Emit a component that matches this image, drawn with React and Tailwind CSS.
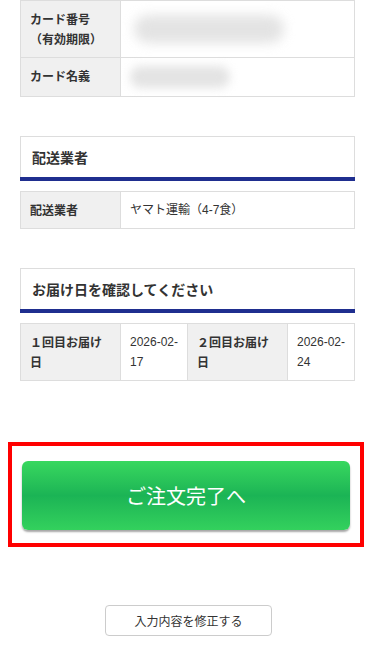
const font = { fontFamily: '"Liberation Sans", "Noto Sans CJK JP", "Noto Sans", sans-serif' };
const jp = { fontFamily: '"Noto Sans CJK JP", "Noto Sans", sans-serif' };

const Label = ({ children, className = "" }) => (
  <div className={`bg-[#f0f0f0] px-[9px] py-[8px] font-bold text-[12px] leading-[20px] text-[#333] ${className}`} style={jp}>
    {children}
  </div>
);

const Value = ({ children, className = "" }) => (
  <div className={`bg-white px-[9px] py-[8px] text-[12px] leading-[20px] text-[#333] ${className}`}>
    {children}
  </div>
);

const SectionHead = ({ title }) => (
  <div className="border border-b-0 border-[#ddd] bg-white">
    <div className="px-[11px] py-[10px] text-[14px] font-bold leading-[20px] text-[#333]" style={jp}>{title}</div>
    <div className="h-[4px] -mx-px bg-[#1f2e8f]"></div>
  </div>
);

export default function App() {
  return (
    <div className="min-h-[667px] bg-white" style={font}>
      <div className="mx-[20px] w-[335px]">
        {/* card info (previous row cut off above) */}
        <div className="border-x border-b border-[#ddd]">
          <div className="grid grid-cols-[100px_1fr] h-[1px] border-b border-[#ddd]">
            <div className="bg-[#f0f0f0] border-r border-[#ddd]"></div>
            <div></div>
          </div>
          <div className="grid grid-cols-[100px_1fr] border-b border-[#ddd]">
            <Label className="border-r border-[#ddd]">
              カード番号
              <br />
              （有効期限）
            </Label>
            <Value className="flex items-center">
              <div className="h-[28px] w-[150px] rounded-full bg-[#d8d8d8] blur-[6px] opacity-70 ml-1"></div>
            </Value>
          </div>
          <div className="grid grid-cols-[100px_1fr]">
            <Label className="border-r border-[#ddd]">カード名義</Label>
            <Value className="flex items-center">
              <div className="h-[22px] w-[100px] rounded-full bg-[#d8d8d8] blur-[5px] opacity-70"></div>
            </Value>
          </div>
        </div>

        {/* delivery */}
        <div className="mt-[39px]">
          <SectionHead title="配送業者" />
        </div>
        <div className="mt-[10px] border border-[#ddd] grid grid-cols-[100px_1fr]">
          <Label className="border-r border-[#ddd]">配送業者</Label>
          <Value>ヤマト運輸（4-7食）</Value>
        </div>

        {/* delivery dates */}
        <div className="mt-[39px]">
          <SectionHead title="お届け日を確認してください" />
        </div>
        <div className="mt-[10px] border border-[#ddd] grid grid-cols-[100px_67px_100px_1fr]">
          <Label className="border-r border-[#ddd]">１回目お届け日</Label>
          <Value className="border-r border-[#ddd] px-[8px] whitespace-nowrap">2026-02-<br />17</Value>
          <Label className="border-r border-[#ddd]">２回目お届け日</Label>
          <Value className="px-[8px] whitespace-nowrap">2026-02-<br />24</Value>
        </div>
      </div>

      {/* submit */}
      <div className="mt-[61px] mx-[8px] w-[356px] border-[4px] border-[#ff0000] px-[10px] pt-[15px] pb-[13px]">
        <button
          className="block w-full h-[69px] rounded-[6px] bg-gradient-to-b from-[#38d85f] via-[#1bb455] to-[#33d15d] text-white text-[20px] leading-none shadow-[0_2px_2px_rgba(0,0,0,0.35)]"
          style={jp}
        >
          ご注文完了へ
        </button>
      </div>

      <div className="mt-[58px] flex justify-center pb-[31px]">
        <button
          className="ml-[2px] w-[167px] h-[31px] rounded-[4px] border border-[#ccc] bg-white text-[12px] text-[#333]"
          style={jp}
        >
          入力内容を修正する
        </button>
      </div>
    </div>
  );
}
